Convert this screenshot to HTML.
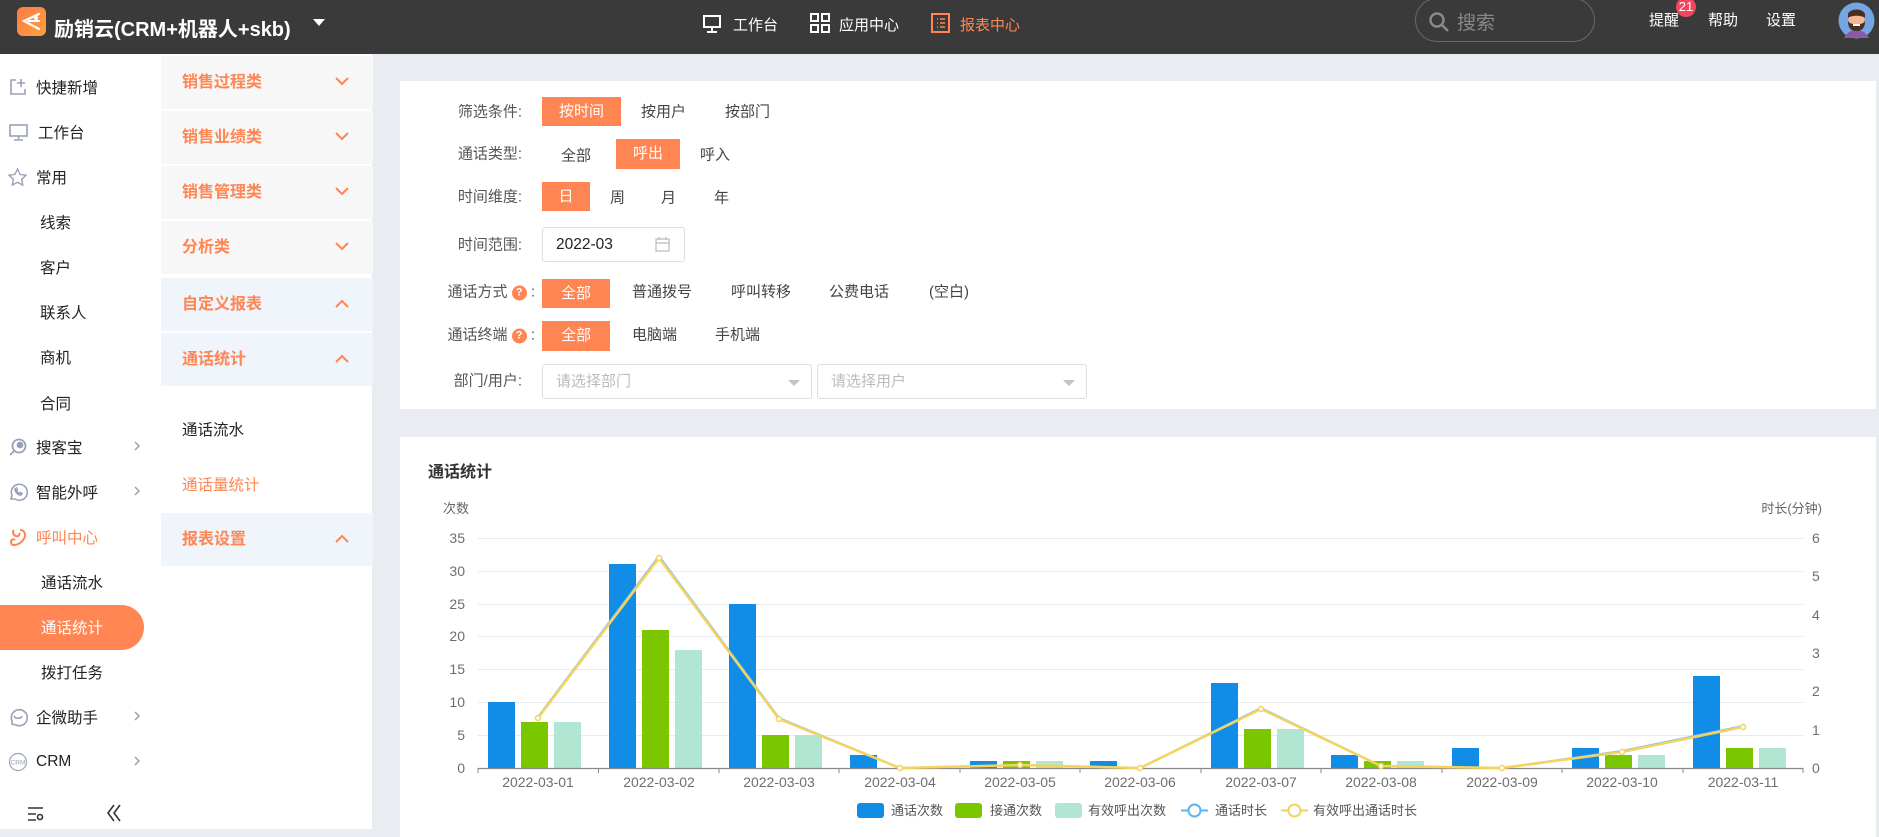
<!DOCTYPE html>
<html><head><meta charset="utf-8"><style>
*{margin:0;padding:0;box-sizing:border-box}
body{width:1879px;height:829px;overflow:hidden;background:#e9edf2;font-family:"Liberation Sans","Noto Sans CJK SC",sans-serif;position:relative;color:#333}
.a{position:absolute;white-space:nowrap}
.hdr{left:0;top:0;width:1879px;height:54px;background:#3a3a3a}
.w{color:#fff;font-size:15px}
.side{left:0;top:54px;width:161px;height:775px;background:#fff}
.si{font-size:15.5px;color:#222;transform:translateY(-50%)}
.p2{left:161px;top:54px;width:212px;height:775px;background:#fff;border-right:1px solid #e6e9ee}
.grp{position:absolute;left:161px;width:212px;height:53px;font-size:16px;font-weight:bold;color:#ff8552;padding-left:21px;line-height:53px}
.grp svg{position:absolute;right:24px;top:21px}
.card{background:#fff}
.lab{font-size:15px;color:#555;transform:translateY(-50%);text-align:right}
.btn{background:#ff8552;color:#fff;font-size:15px;text-align:center;position:absolute}
.opt{font-size:15px;color:#444;transform:translateY(-50%)}
.q{display:inline-block;width:15px;height:15px;border-radius:50%;background:#ff8552;color:#fff;font-size:11px;text-align:center;line-height:15px;font-weight:bold;vertical-align:1px}
.sel{border:1px solid #dcdfe6;border-radius:3px;background:#fff;font-size:15px;color:#bbb;padding-left:13px;line-height:33px}
</style></head><body>
<div class="a hdr"></div>
<div class="a" style="left:17px;top:7px;width:29px;height:29px;border-radius:6px;background:linear-gradient(135deg,#ff7a45,#ffa040)"></div>
<svg class="a" style="left:17px;top:7px" width="29" height="29" viewBox="0 0 29 29"><path d="M22 7 L7 14 L22 22" stroke="#fff" stroke-width="2.2" fill="none" stroke-linecap="round"/><path d="M11 14 L23 14" stroke="#fff" stroke-width="2"/><circle cx="19" cy="11" r="2" fill="#fff"/></svg>
<div class="a" style="left:54px;top:13px;font-size:20px;font-weight:bold;color:#fff">励销云(CRM+机器人+skb)</div>
<svg class="a" style="left:313px;top:19px" width="12" height="8"><path d="M0 0H12L6 7Z" fill="#fff"/></svg>
<svg class="a" style="left:702px;top:14px" width="20" height="20" viewBox="0 0 20 20" fill="none" stroke="#fff" stroke-width="2"><rect x="2" y="2" width="16" height="11"/><path d="M10 13v4M5 18h10"/></svg>
<div class="a w" style="left:733px;top:14px">工作台</div>
<svg class="a" style="left:810px;top:13px" width="20" height="20" viewBox="0 0 20 20" fill="none" stroke="#fff" stroke-width="2"><rect x="1" y="1" width="7" height="7"/><rect x="12" y="1" width="7" height="7"/><rect x="1" y="12" width="7" height="7"/><rect x="12" y="12" width="7" height="7"/></svg>
<div class="a w" style="left:839px;top:14px">应用中心</div>
<svg class="a" style="left:931px;top:13px" width="19" height="20" viewBox="0 0 19 20" fill="none" stroke="#ff8552" stroke-width="2"><rect x="1" y="1" width="17" height="18"/><path d="M6 6h1M9 6h5M6 10h1M9 10h5M6 14h1M9 14h5" stroke-width="1.6"/></svg>
<div class="a w" style="left:960px;top:14px;color:#ff8552">报表中心</div>
<div class="a" style="left:1415px;top:-2px;width:180px;height:44px;border:1px solid #6a6a6a;border-radius:22px"></div>
<svg class="a" style="left:1428px;top:11px" width="22" height="22" viewBox="0 0 22 22" fill="none" stroke="#8a8a8a" stroke-width="2.4"><circle cx="9" cy="9" r="6.5"/><path d="M14 14l6 6"/></svg>
<div class="a" style="left:1457px;top:8px;font-size:19px;color:#888">搜索</div>
<div class="a w" style="left:1649px;top:9px">提醒</div>
<div class="a" style="left:1676px;top:-3px;width:20px;height:20px;border-radius:10px;background:#f0465e;color:#fff;font-size:13px;text-align:center;line-height:20px">21</div>
<div class="a w" style="left:1708px;top:9px">帮助</div>
<div class="a w" style="left:1766px;top:9px">设置</div>
<svg class="a" style="left:1838px;top:2px" width="37" height="37" viewBox="0 0 37 37"><circle cx="18.5" cy="18.5" r="18" fill="#74a6e4"/><path d="M6 36c3-6 8-8 12.5-8s9.5 2 12.5 8z" fill="#8a5aa8"/><ellipse cx="18.5" cy="17" rx="8" ry="9" fill="#f3b894"/><path d="M10 19c0 8 4 10 8.5 10s8.5-2 8.5-10c-2 3-4 3-8.5 3s-6.5 0-8.5-3z" fill="#4a3020"/><path d="M10 12c2-6 15-6 17 0v4c-3-3-14-3-17 0z" fill="#4a3020"/><rect x="15" y="22" width="7" height="2" fill="#fff"/></svg>

<div class="a side"></div>
<svg class="a" style="left:9px;top:78px" width="18" height="18" viewBox="0 0 18 18" fill="none" stroke="#9aa0b8" stroke-width="1.6"><path d="M7 2H2v14h14v-5"/><path d="M12 1v8M8 5h8"/></svg>
<div class="a si" style="left:36px;top:87px">快捷新增</div>
<svg class="a" style="left:9px;top:124px" width="19" height="17" viewBox="0 0 19 17" fill="none" stroke="#9aa0b8" stroke-width="1.6"><rect x="1" y="1" width="17" height="11"/><path d="M9.5 12v3M5 16h9"/></svg>
<div class="a si" style="left:38px;top:132px">工作台</div>
<svg class="a" style="left:8px;top:168px" width="19" height="18" viewBox="0 0 19 18" fill="none" stroke="#9aa0b8" stroke-width="1.4"><path d="M9.5 1l2.6 5.4 5.9.8-4.3 4.1 1 5.8-5.2-2.8-5.2 2.8 1-5.8L1 7.2l5.9-.8z"/></svg>
<div class="a si" style="left:36px;top:177px">常用</div>
<div class="a si" style="left:40px;top:222px">线索</div>
<div class="a si" style="left:40px;top:267px">客户</div>
<div class="a si" style="left:40px;top:312px">联系人</div>
<div class="a si" style="left:40px;top:357px">商机</div>
<div class="a si" style="left:40px;top:403px">合同</div>
<svg class="a" style="left:8px;top:437px" width="20" height="20" viewBox="0 0 20 20" fill="none" stroke="#9aa0b8" stroke-width="1.8"><circle cx="11" cy="9" r="6.5"/><circle cx="12" cy="8" r="2.5" fill="#9aa0b8"/><path d="M6 14l-4 4"/></svg>
<div class="a si" style="left:36px;top:447px">搜客宝</div>
<svg class="a" style="left:8px;top:482px" width="20" height="20" viewBox="0 0 20 20" fill="none" stroke="#9aa0b8" stroke-width="1.6"><path d="M3 17l1-3.5A8 8 0 1 1 7 17z"/><path d="M7 7c0 3 3 6 6 6l1-1.5-2-1-1 1c-1-.5-2-1.5-2.5-2.5l1-1-1-2z"/></svg>
<div class="a si" style="left:36px;top:492px">智能外呼</div>
<svg class="a" style="left:8px;top:527px" width="20" height="20" viewBox="0 0 20 20" fill="none" stroke="#ff8552" stroke-width="2"><path d="M12 3c3 0 5 2 5 5 0 5-6 10-11 10-2 0-3-1-3-3 0-3 3-3 4-2"/><path d="M6 3c-2 2-1 5 2 6s4-2 3-3"/></svg>
<div class="a si" style="left:36px;top:537px;color:#ff8552">呼叫中心</div>
<div class="a si" style="left:41px;top:582px">通话流水</div>
<div class="a" style="left:0;top:605px;width:144px;height:45px;background:#ff8552;border-radius:0 23px 23px 0"></div>
<div class="a si" style="left:41px;top:627px;color:#fff">通话统计</div>
<div class="a si" style="left:41px;top:672px">拨打任务</div>
<svg class="a" style="left:8px;top:707px" width="20" height="20" viewBox="0 0 20 20" fill="none" stroke="#9aa0b8" stroke-width="1.6"><path d="M4 17v-3A8 8 0 1 1 8 18z"/><path d="M6 9c1 3 7 3 8 0"/></svg>
<div class="a si" style="left:36px;top:717px">企微助手</div>
<svg class="a" style="left:8px;top:752px" width="20" height="20" viewBox="0 0 20 20"><circle cx="10" cy="10" r="8.5" fill="none" stroke="#9aa0b8" stroke-width="1.2"/><text x="10" y="12.5" font-size="6.5" text-anchor="middle" fill="#9aa0b8" font-family="Liberation Sans">CRM</text></svg>
<div class="a si" style="left:36px;top:762px">CRM</div>
<svg class="a" style="left:133px;top:440px" width="8" height="340" fill="none" stroke="#9aa0b8" stroke-width="1.5"><path d="M2 2l4 4-4 4M2 47l4 4-4 4M2 272l4 4-4 4M2 317l4 4-4 4"/></svg>
<svg class="a" style="left:27px;top:806px" width="18" height="16" fill="none" stroke="#333" stroke-width="1.6"><path d="M1 2h15M1 8h8M1 14h8"/><circle cx="13" cy="11" r="2.5"/></svg>
<svg class="a" style="left:106px;top:804px" width="16" height="18" fill="none" stroke="#333" stroke-width="1.6"><path d="M8 1L2 9l6 8M14 1L8 9l6 8"/></svg>

<div class="a p2"></div>
<div class="grp" style="top:56px;background:#f7f7f7">销售过程类<svg width="14" height="9" fill="none" stroke="#ff8552" stroke-width="2"><path d="M1 1l6 6 6-6"/></svg></div>
<div class="grp" style="top:111px;background:#f7f7f7">销售业绩类<svg width="14" height="9" fill="none" stroke="#ff8552" stroke-width="2"><path d="M1 1l6 6 6-6"/></svg></div>
<div class="grp" style="top:166px;background:#f7f7f7">销售管理类<svg width="14" height="9" fill="none" stroke="#ff8552" stroke-width="2"><path d="M1 1l6 6 6-6"/></svg></div>
<div class="grp" style="top:221px;background:#f7f7f7">分析类<svg width="14" height="9" fill="none" stroke="#ff8552" stroke-width="2"><path d="M1 1l6 6 6-6"/></svg></div>
<div class="grp" style="top:278px;background:#eff5fb">自定义报表<svg width="14" height="9" fill="none" stroke="#ff8552" stroke-width="2"><path d="M1 8l6-6 6 6"/></svg></div>
<div class="grp" style="top:333px;background:#eff5fb">通话统计<svg width="14" height="9" fill="none" stroke="#ff8552" stroke-width="2"><path d="M1 8l6-6 6 6"/></svg></div>
<div class="a si" style="left:182px;top:429px;font-size:15.5px">通话流水</div>
<div class="a si" style="left:182px;top:484px;font-size:15.5px;color:#ff8552">通话量统计</div>
<div class="grp" style="top:513px;background:#eff5fb">报表设置<svg width="14" height="9" fill="none" stroke="#ff8552" stroke-width="2"><path d="M1 8l6-6 6 6"/></svg></div>

<div class="a card" style="left:400px;top:81px;width:1476px;height:328px"></div>
<div class="a lab" style="right:1357px;top:111px">筛选条件:</div>
<div class="btn" style="left:542px;top:97px;width:79px;height:29px;line-height:29px">按时间</div>
<div class="a opt" style="left:641px;top:111px">按用户</div>
<div class="a opt" style="left:725px;top:111px">按部门</div>
<div class="a lab" style="right:1357px;top:153px">通话类型:</div>
<div class="a opt" style="left:561px;top:155px">全部</div>
<div class="btn" style="left:616px;top:139px;width:64px;height:30px;line-height:30px">呼出</div>
<div class="a opt" style="left:700px;top:154px">呼入</div>
<div class="a lab" style="right:1357px;top:196px">时间维度:</div>
<div class="btn" style="left:542px;top:182px;width:48px;height:29px;line-height:29px">日</div>
<div class="a opt" style="left:610px;top:197px">周</div>
<div class="a opt" style="left:661px;top:197px">月</div>
<div class="a opt" style="left:714px;top:197px">年</div>
<div class="a lab" style="right:1357px;top:244px">时间范围:</div>
<div class="a" style="left:542px;top:227px;width:143px;height:35px;border:1px solid #dcdfe6;border-radius:3px;font-size:15.5px;color:#222;padding-left:13px;line-height:33px">2022-03</div>
<svg class="a" style="left:655px;top:237px" width="15" height="15" fill="none" stroke="#bbb" stroke-width="1.2"><rect x="1" y="2" width="13" height="12"/><path d="M1 6h13M4 0v3M11 0v3"/></svg>
<div class="a lab" style="right:1344px;top:291px">通话方式 <span class="q">?</span> :</div>
<div class="btn" style="left:542px;top:279px;width:68px;height:29px;line-height:29px">全部</div>
<div class="a opt" style="left:632px;top:291px">普通拨号</div>
<div class="a opt" style="left:731px;top:291px">呼叫转移</div>
<div class="a opt" style="left:829px;top:291px">公费电话</div>
<div class="a opt" style="left:929px;top:291px">(空白)</div>
<div class="a lab" style="right:1344px;top:334px">通话终端 <span class="q">?</span> :</div>
<div class="btn" style="left:542px;top:321px;width:68px;height:30px;line-height:30px">全部</div>
<div class="a opt" style="left:632px;top:334px">电脑端</div>
<div class="a opt" style="left:715px;top:334px">手机端</div>
<div class="a lab" style="right:1357px;top:380px">部门/用户:</div>
<div class="a sel" style="left:542px;top:364px;width:270px;height:35px">请选择部门</div>
<div class="a sel" style="left:817px;top:364px;width:270px;height:35px">请选择用户</div>
<svg class="a" style="left:788px;top:380px" width="12" height="7"><path d="M0 0h12L6 6z" fill="#c0c4cc"/></svg>
<svg class="a" style="left:1063px;top:380px" width="12" height="7"><path d="M0 0h12L6 6z" fill="#c0c4cc"/></svg>

<div class="a card" style="left:400px;top:437px;width:1476px;height:400px"></div>
<svg class="a" style="left:0;top:0" width="1879" height="829" font-family="Liberation Sans,Noto Sans CJK SC,sans-serif">
<text x="428" y="477" font-size="16" font-weight="bold" fill="#333">通话统计</text>
<text x="443" y="513" font-size="13" fill="#666">次数</text>
<text x="1822" y="513" font-size="13" fill="#666" text-anchor="end">时长(分钟)</text>
<g stroke="#e6ebf3" stroke-width="1">
<path d="M478 538.5H1803M478 571.5H1803M478 604.5H1803M478 636.5H1803M478 669.5H1803M478 702.5H1803M478 735.5H1803"/>
</g>
<g font-size="14" fill="#6e6e6e" text-anchor="end">
<text x="465" y="543">35</text><text x="465" y="576">30</text><text x="465" y="609">25</text><text x="465" y="641">20</text><text x="465" y="674">15</text><text x="465" y="707">10</text><text x="465" y="740">5</text><text x="465" y="773">0</text>
</g>
<g font-size="14" fill="#6e6e6e">
<text x="1812" y="543">6</text><text x="1812" y="581">5</text><text x="1812" y="620">4</text><text x="1812" y="658">3</text><text x="1812" y="696">2</text><text x="1812" y="735">1</text><text x="1812" y="773">0</text>
</g>
<g fill="#118de8">
<rect x="488" y="702" width="27" height="66"/><rect x="609" y="564" width="27" height="204"/><rect x="729" y="604" width="27" height="164"/><rect x="850" y="755" width="27" height="13"/><rect x="970" y="761" width="27" height="7"/><rect x="1090" y="761" width="27" height="7"/><rect x="1211" y="683" width="27" height="85"/><rect x="1331" y="755" width="27" height="13"/><rect x="1452" y="748" width="27" height="20"/><rect x="1572" y="748" width="27" height="20"/><rect x="1693" y="676" width="27" height="92"/>
</g>
<g fill="#7ac700">
<rect x="521" y="722" width="27" height="46"/><rect x="642" y="630" width="27" height="138"/><rect x="762" y="735" width="27" height="33"/><rect x="1003" y="761" width="27" height="7"/><rect x="1244" y="729" width="27" height="39"/><rect x="1364" y="761" width="27" height="7"/><rect x="1605" y="755" width="27" height="13"/><rect x="1726" y="748" width="27" height="20"/>
</g>
<g fill="#b0e6d2">
<rect x="554" y="722" width="27" height="46"/><rect x="675" y="650" width="27" height="118"/><rect x="795" y="735" width="27" height="33"/><rect x="1036" y="761" width="27" height="7"/><rect x="1277" y="729" width="27" height="39"/><rect x="1397" y="761" width="27" height="7"/><rect x="1638" y="755" width="27" height="13"/><rect x="1759" y="748" width="27" height="20"/>
</g>
<path d="M478 768.5H1803" stroke="#888" stroke-width="1.2"/>
<path d="M478 768v5M598.5 768v5M719 768v5M839 768v5M960 768v5M1080 768v5M1201 768v5M1321 768v5M1442 768v5M1562 768v5M1683 768v5M1803 768v5" stroke="#888"/>
<polyline points="538,717 659,556 779,718 900,768 1020,765 1140,768 1261,708 1381,766 1502,768 1622,751 1743,726" fill="none" stroke="#7cc3f5" stroke-width="2"/>
<polyline points="538,718 659,558 779,719 900,768 1020,765 1140,768 1261,709 1381,766 1502,768 1622,752 1743,727" fill="none" stroke="#f5d35c" stroke-width="2.5"/>
<g fill="#fff" stroke="#f5d35c" stroke-width="1.5">
<circle cx="538" cy="718" r="2.5"/><circle cx="659" cy="558" r="2.5"/><circle cx="779" cy="719" r="2.5"/><circle cx="900" cy="768" r="2.5"/><circle cx="1020" cy="765" r="2.5"/><circle cx="1140" cy="768" r="2.5"/><circle cx="1261" cy="709" r="2.5"/><circle cx="1381" cy="766" r="2.5"/><circle cx="1502" cy="768" r="2.5"/><circle cx="1622" cy="752" r="2.5"/><circle cx="1743" cy="727" r="2.5"/>
</g>
<g font-size="14" fill="#6e6e6e" text-anchor="middle">
<text x="538" y="787">2022-03-01</text><text x="659" y="787">2022-03-02</text><text x="779" y="787">2022-03-03</text><text x="900" y="787">2022-03-04</text><text x="1020" y="787">2022-03-05</text><text x="1140" y="787">2022-03-06</text><text x="1261" y="787">2022-03-07</text><text x="1381" y="787">2022-03-08</text><text x="1502" y="787">2022-03-09</text><text x="1622" y="787">2022-03-10</text><text x="1743" y="787">2022-03-11</text>
</g>
<g font-size="13" fill="#555">
<rect x="857" y="803" width="27" height="15" rx="3" fill="#118de8"/><text x="891" y="815">通话次数</text>
<rect x="955" y="803" width="27" height="15" rx="3" fill="#7ac700"/><text x="990" y="815">接通次数</text>
<rect x="1055" y="803" width="27" height="15" rx="3" fill="#b0e6d2"/><text x="1088" y="815">有效呼出次数</text>
<path d="M1181 810.5h27" stroke="#5ab6f5" stroke-width="2"/><circle cx="1194.5" cy="810.5" r="6" fill="#fff" stroke="#5ab6f5" stroke-width="2"/><text x="1215" y="815">通话时长</text>
<path d="M1281 810.5h27" stroke="#f5d35c" stroke-width="2"/><circle cx="1294.5" cy="810.5" r="6" fill="#fff" stroke="#f5d35c" stroke-width="2"/><text x="1313" y="815">有效呼出通话时长</text>
</g>
</svg>
</body></html>
